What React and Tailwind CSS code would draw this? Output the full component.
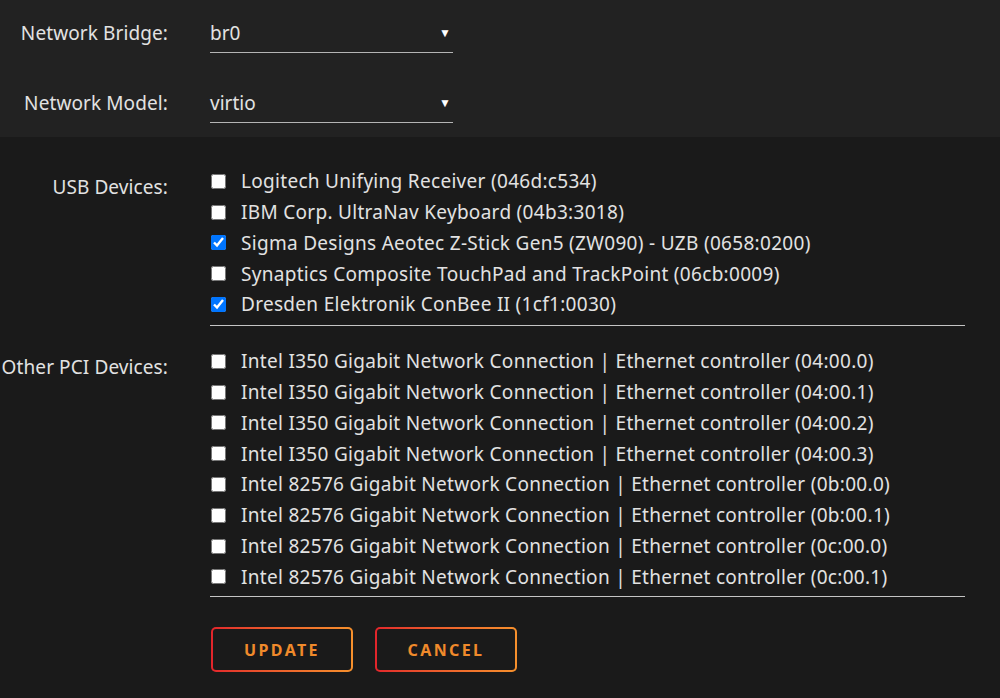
import { useState } from 'react';

const USB_DEVICES = [
  { name: 'Logitech Unifying Receiver (046d:c534)', checked: false },
  { name: 'IBM Corp. UltraNav Keyboard (04b3:3018)', checked: false },
  { name: 'Sigma Designs Aeotec Z-Stick Gen5 (ZW090) - UZB (0658:0200)', checked: true },
  { name: 'Synaptics Composite TouchPad and TrackPoint (06cb:0009)', checked: false },
  { name: 'Dresden Elektronik ConBee II (1cf1:0030)', checked: true },
];

const PCI_DEVICES = [
  'Intel I350 Gigabit Network Connection | Ethernet controller (04:00.0)',
  'Intel I350 Gigabit Network Connection | Ethernet controller (04:00.1)',
  'Intel I350 Gigabit Network Connection | Ethernet controller (04:00.2)',
  'Intel I350 Gigabit Network Connection | Ethernet controller (04:00.3)',
  'Intel 82576 Gigabit Network Connection | Ethernet controller (0b:00.0)',
  'Intel 82576 Gigabit Network Connection | Ethernet controller (0b:00.1)',
  'Intel 82576 Gigabit Network Connection | Ethernet controller (0c:00.0)',
  'Intel 82576 Gigabit Network Connection | Ethernet controller (0c:00.1)',
];

function SelectRow({ label, value }) {
  return (
    <div className="flex items-end">
      <div className="w-[168px] text-right pb-[6px] whitespace-nowrap tracking-[0.1px]">{label}</div>
      <div className="ml-[42px] w-[243px] h-[40px] border-b border-[#b5b5b5] flex items-center justify-between pr-[2px]">
        <span className="pt-[2px]">{value}</span>
        <span className="text-[12px] text-white">▼</span>
      </div>
    </div>
  );
}

function CheckRow({ label, checked, onToggle }) {
  return (
    <label className="flex items-center h-[30.8px] cursor-pointer">
      <input
        type="checkbox"
        checked={checked}
        onChange={onToggle}
        className="w-[15px] h-[15px] ml-[1px] m-0"
      />
      <span className="ml-[15px] whitespace-nowrap tracking-[0.3px]">{label}</span>
    </label>
  );
}

function GradientButton({ children }) {
  return (
    <button className="p-[2px] rounded-[5px] bg-gradient-to-r from-[#e2242b] to-[#f6902c]">
      <span className="flex items-center justify-center w-[138px] h-[41px] rounded-[3px] bg-[#1a1a1a] text-[#f08a2b] font-bold text-[16px] tracking-[0.15em]">
        {children}
      </span>
    </button>
  );
}

export default function App() {
  const [usb, setUsb] = useState(USB_DEVICES.map(d => d.checked));
  const [pci, setPci] = useState(PCI_DEVICES.map(() => false));

  return (
    <div
      className="w-[1000px] h-[698px] overflow-hidden bg-[#1a1a1a] text-[#e2e2e2] text-[19px]"
      style={{ fontFamily: '"Noto Sans", "Open Sans", sans-serif' }}
    >
      <div className="bg-[#222222] pt-[13px] h-[137px] flex flex-col gap-[30px]">
        <SelectRow label="Network Bridge:" value="br0" />
        <SelectRow label="Network Model:" value="virtio" />
      </div>

      <div className="pt-[29px]">
        <div className="flex">
          <div className="w-[168px] text-right pt-[7px] whitespace-nowrap tracking-[0.1px]">USB Devices:</div>
          <div className="ml-[42px] w-[755px]">
            {USB_DEVICES.map((d, i) => (
              <CheckRow
                key={d.name}
                label={d.name}
                checked={usb[i]}
                onToggle={() => setUsb(u => u.map((v, j) => (j === i ? !v : v)))}
              />
            ))}
            <div className="mt-[5px] border-b border-[#c4c4c4]" />
          </div>
        </div>

        <div className="flex mt-[20px]">
          <div className="w-[168px] text-right pt-[7px] whitespace-nowrap tracking-[0.1px]">Other PCI Devices:</div>
          <div className="ml-[42px] w-[755px]">
            {PCI_DEVICES.map((name, i) => (
              <CheckRow
                key={name}
                label={name}
                checked={pci[i]}
                onToggle={() => setPci(p => p.map((v, j) => (j === i ? !v : v)))}
              />
            ))}
            <div className="mt-[4px] border-b border-[#c4c4c4]" />
            <div className="flex gap-[22px] mt-[30px] ml-[1px]">
              <GradientButton>UPDATE</GradientButton>
              <GradientButton>CANCEL</GradientButton>
            </div>
          </div>
        </div>
      </div>
    </div>
  );
}
